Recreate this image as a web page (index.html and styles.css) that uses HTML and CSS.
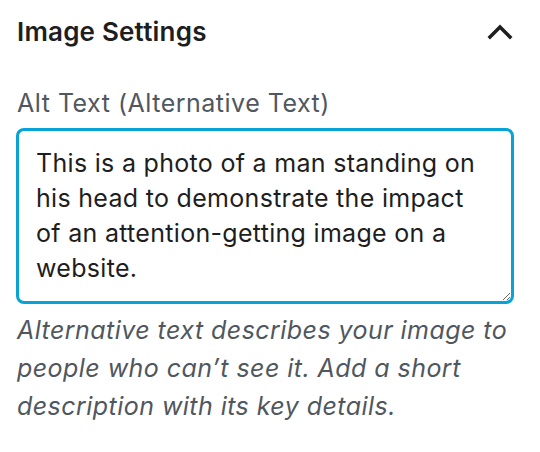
FILE: index.html
```html
<!DOCTYPE html>
<html lang="en">
<head>
	<meta charset="UTF-8">
	<title>Image Settings</title>
	<link rel="stylesheet" href="styles.css">
</head>
<body>
<div class="panel">
	<div class="panel-head">
		<h2 class="panel-title">Image Settings</h2>
		<svg class="chevron" width="26" height="18" viewBox="0 0 26 18">
			<polyline points="3,15 13,5 23,15" />
		</svg>
	</div>
	<div class="field">
		<label class="field-label" for="alt">Alt Text (Alternative Text)</label>
		<textarea class="field-input" id="alt">This is a photo of a man standing on his head to demonstrate the impact of an attention-getting image on a website.</textarea>
		<p class="field-help">Alternative text describes your image to people who can’t see it. Add a short description with its key details.</p>
	</div>
</div>
</body>
</html>
```

FILE: styles.css
```css
*{
	padding: 0;
	margin: 0;
	box-sizing: border-box;
}
body{
	background: #fff;
	font-family: Inter, "Noto Sans", sans-serif;
	color: #1e1e1e;
}
.panel{
	width: 540px;
	padding: 0 17px;
}
.panel-head{
	height: 62px;
	display: flex;
	align-items: center;
	justify-content: space-between;
}
.panel-title{
	font-size: 26px;
	font-weight: 600;
	letter-spacing: 0.2px;
	color: #1e1e1e;
}
.chevron{
	margin-right: 10px;
}
.chevron polyline{
	fill: none;
	stroke: #1e1e1e;
	stroke-width: 3.5;
	stroke-linecap: square;
}
.field{
	padding-top: 26px;
}
.field-label{
	display: block;
	font-size: 25px;
	line-height: 30px;
	letter-spacing: 0.5px;
	color: #50575e;
	margin-bottom: 10px;
}
.field-input{
	display: block;
	width: 498px;
	height: 176px;
	margin-left: -1px;
	padding: 15px 17px 11px;
	border: 3px solid #07a3d6;
	border-radius: 8px;
	font-family: Inter, "Noto Sans", sans-serif;
	font-size: 25px;
	line-height: 35px;
	letter-spacing: 0.3px;
	color: #1e1e1e;
	outline: none;
	overflow: hidden;
}
.field-help{
	margin-top: 7px;
	font-size: 25px;
	line-height: 38px;
	font-style: italic;
	letter-spacing: 0.45px;
	color: #50575e;
}
```
